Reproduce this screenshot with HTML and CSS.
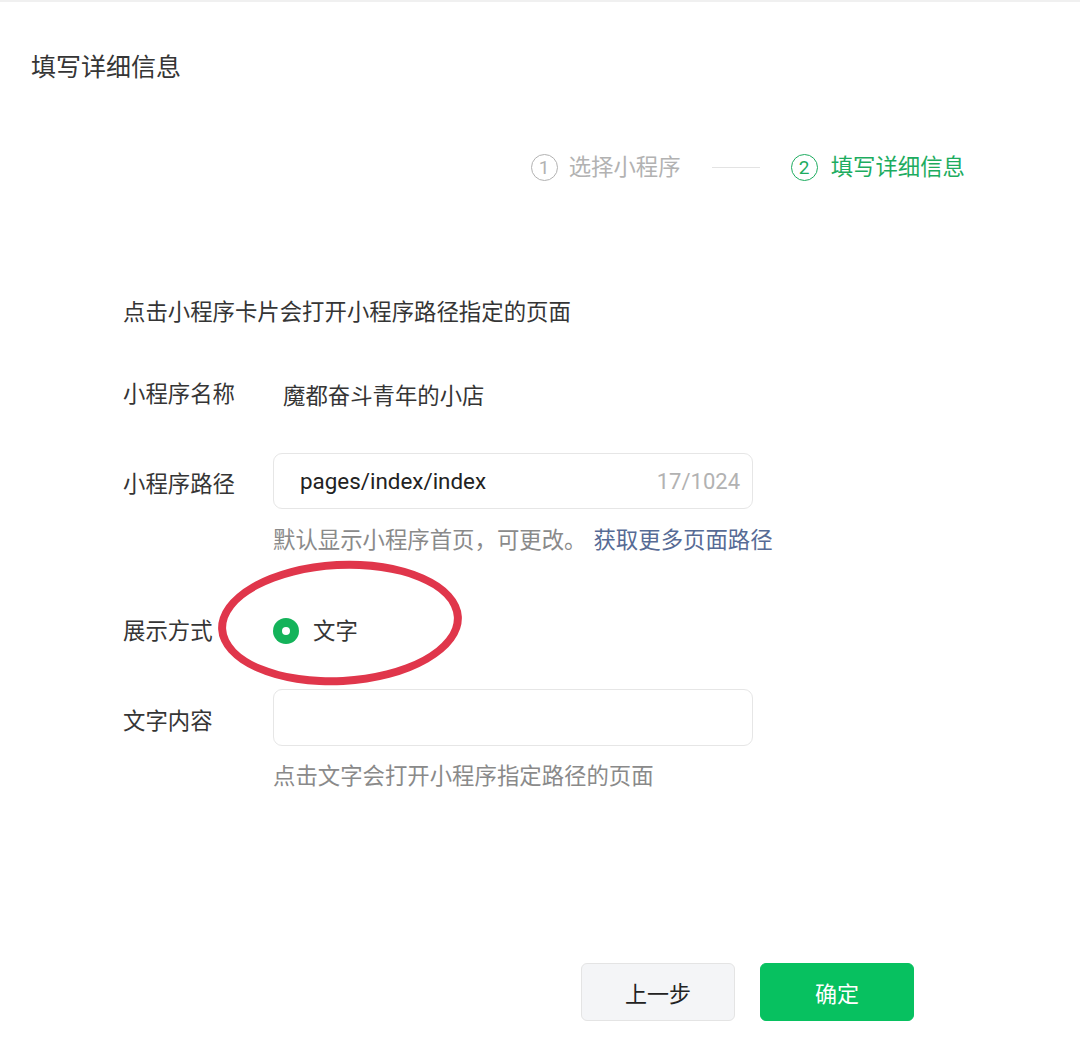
FILE: index.html
```html
<!DOCTYPE html>
<html lang="zh-CN">
<head>
<meta charset="utf-8">
<link rel="stylesheet" href="styles.css">
</head>
<body>
<div class="page">
  <h1 class="title">填写详细信息</h1>
  <div class="steps">
    <div class="step">
      <span class="step-num">1</span>
      <span class="step-text">选择小程序</span>
    </div>
    <span class="step-line"></span>
    <div class="step step-active">
      <span class="step-num">2</span>
      <span class="step-text">填写详细信息</span>
    </div>
  </div>

  <div class="form">
    <p class="intro">点击小程序卡片会打开小程序路径指定的页面</p>

    <div class="row row-name">
      <span class="label">小程序名称</span>
      <span class="value">魔都奋斗青年的小店</span>
    </div>

    <div class="row row-path">
      <span class="label">小程序路径</span>
      <div class="input">
        <span class="input-text">pages/index/index</span>
        <span class="counter">17/1024</span>
      </div>
    </div>
    <p class="hint hint-path">默认显示小程序首页，可更改。<a class="link">获取更多页面路径</a></p>

    <div class="row row-display">
      <span class="label">展示方式</span>
      <div class="radio-wrap">
        <span class="radio"></span>
        <span class="radio-text">文字</span>
        <span class="annot"></span>
      </div>
    </div>

    <div class="row row-content">
      <span class="label">文字内容</span>
      <div class="input input-tall"></div>
    </div>
    <p class="hint hint-content">点击文字会打开小程序指定路径的页面</p>
  </div>

  <div class="actions">
    <button class="btn btn-default">上一步</button>
    <button class="btn btn-primary">确定</button>
  </div>
</div>
</body>
</html>
```

FILE: styles.css
```css
* { box-sizing: border-box; }
html, body { margin: 0; padding: 0; background: #fff; }
body {
  font-family: Roboto, "Noto Sans CJK SC", sans-serif;
  color: #353535;
  width: 1080px;
  height: 1044px;
  overflow: hidden;
}
.page {
  border-top: 2px solid #f0f0f0;
  height: 1044px;
}
.title {
  margin: 50px 0 0 31px;
  font-size: 25px;
  font-weight: 400;
  line-height: 32px;
  height: 32px;
  color: #353535;
}
.steps {
  margin-top: 69px;
  height: 28px;
  display: flex;
  justify-content: flex-end;
  align-items: center;
  padding-right: 115px;
}
.step {
  display: flex;
  align-items: center;
  color: #b2b2b2;
}
.step-num {
  width: 27px;
  height: 27px;
  border: 1.6px solid #b2b2b2;
  border-radius: 50%;
  display: flex;
  align-items: center;
  justify-content: center;
  font-size: 19px;
  line-height: 1;
  margin-right: 11px;
}
.step-text {
  font-size: 22.4px;
  line-height: 28px;
}
.step-line {
  width: 48px;
  height: 1px;
  background: #e3e3e3;
  margin: 0 31px;
}
.step-active { color: #1dac5f; }
.step-active .step-num { border-color: #1dac5f; margin-right: 13px; }

.form {
  padding-left: 123px;
  font-size: 22.4px;
}
.intro {
  margin: 116px 0 0;
  line-height: 30px;
  height: 30px;
  font-size: 22.4px;
}
.row {
  display: flex;
  align-items: center;
}
.label {
  width: 150px;
  flex: none;
  font-size: 22.4px;
  line-height: 30px;
}
.row-name { margin-top: 52px; height: 30px; }
.value { margin-left: 10px; font-size: 22.4px; }
.row-path { margin-top: 44px; }
.row-path .label, .row-content .label { position: relative; top: 3px; }
.input {
  width: 480px;
  height: 56px;
  border: 1.5px solid #e6e6e6;
  border-radius: 9px;
  display: flex;
  align-items: center;
  justify-content: space-between;
  padding: 0 12px 0 26px;
}
.input-text { font-size: 22.4px; color: #222; }
.counter { font-size: 22px; color: #b2b2b2; }
.input-tall { height: 57px; }
.hint {
  margin: 0;
  line-height: 30px;
  height: 30px;
  padding-left: 150px;
  color: #8a8a8a;
  font-size: 22.4px;
}
.hint-path { margin-top: 16px; }
.link { color: #576b95; margin-left: 7px; }
.row-display { margin-top: 61px; height: 30px; }
.radio-wrap {
  position: relative;
  display: flex;
  align-items: center;
}
.radio {
  width: 26px;
  height: 26px;
  border-radius: 50%;
  background: #14b35a;
  display: flex;
  align-items: center;
  justify-content: center;
  margin-right: 14px;
}
.radio::after {
  content: "";
  width: 8px;
  height: 8px;
  border-radius: 50%;
  background: #fff;
}
.radio-text { font-size: 22.4px; line-height: 30px; }
.annot {
  position: absolute;
  left: -55px;
  top: -55px;
  width: 244px;
  height: 124px;
  border: 8px solid #e0364b;
  border-radius: 50%;
  transform: rotate(-3deg);
}
.row-content { margin-top: 43px; }
.hint-content { margin-top: 15px; }

.actions {
  margin-top: 172px;
  display: flex;
  justify-content: flex-end;
  padding-right: 166px;
  gap: 25px;
}
.btn {
  width: 154px;
  height: 58px;
  border-radius: 6px;
  font-family: Roboto, "Noto Sans CJK SC", sans-serif;
  font-size: 22px;
  border: 1.5px solid #e4e4e4;
  cursor: pointer;
}
.btn-default { background: #f4f5f7; color: #222; }
.btn-primary { background: #07c160; border-color: #07c160; color: #fff; }
```
